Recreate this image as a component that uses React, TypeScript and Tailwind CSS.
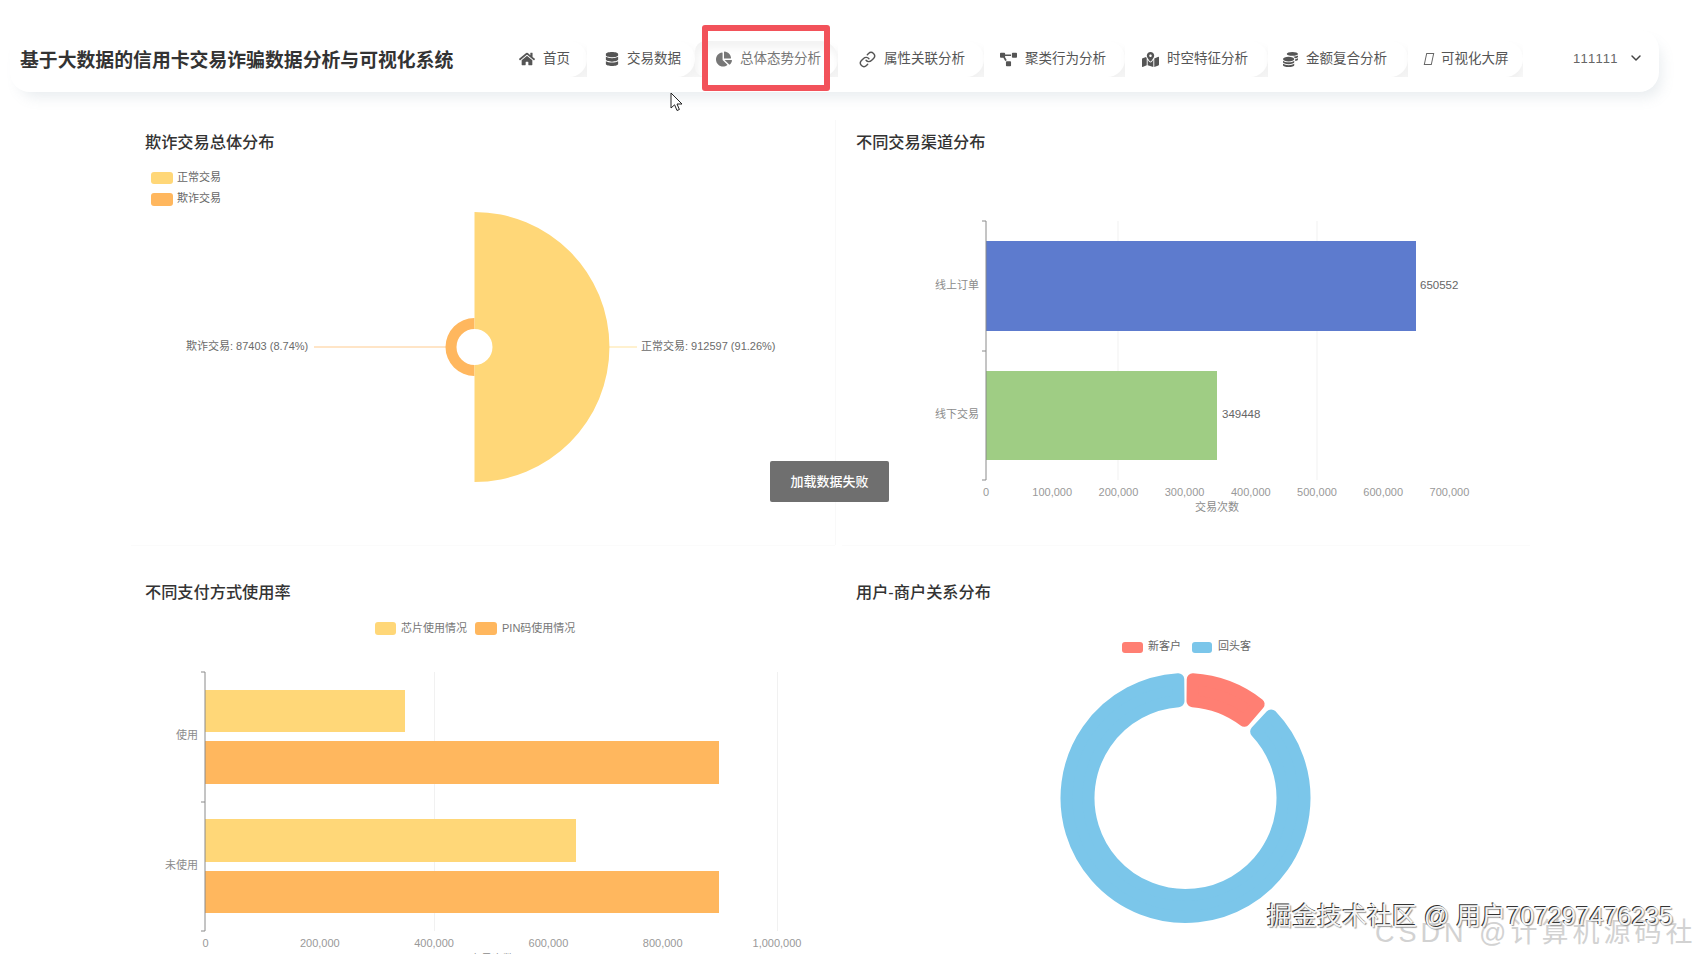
import type { ReactNode } from "react";
import { FaHome, FaDatabase, FaChartPie, FaProjectDiagram, FaMapMarkedAlt, FaCoins } from "react-icons/fa";
import { Link, ChevronDown } from "lucide-react";

const YELLOW = "#FFD778";
const ORANGE = "#FFB75E";

type NavItem = { label: string; icon: ReactNode; box: string; active?: boolean };

const navItems: NavItem[] = [
  { label: "首页", icon: <FaHome size={16} />, box: "w-[87px] pl-[19px]" },
  { label: "交易数据", icon: <FaDatabase size={14} />, box: "w-[108px] pl-[18px]" },
  { label: "总体态势分析", icon: <FaChartPie size={16} />, box: "w-[143px] pl-[21px]", active: true },
  { label: "属性关联分析", icon: <Link size={17} />, box: "w-[146px] pl-[21px]" },
  { label: "聚类行为分析", icon: <FaProjectDiagram size={17} />, box: "w-[141px] pl-[16px]" },
  { label: "时空特征分析", icon: <FaMapMarkedAlt size={17} />, box: "w-[143px] pl-[17px]" },
  { label: "金额复合分析", icon: <FaCoins size={15} />, box: "w-[140px] pl-[15px]" },
  {
    label: "可视化大屏",
    icon: <span className="block w-[8px] h-[12px] border border-[#666] -skew-x-12" />,
    box: "w-[115px] pl-[17px]",
  },
];

// chart label helper, coordinates are the page's own
function Label({
  x,
  y,
  children,
  anchor = "start",
  size = 11,
  color = "#777",
}: {
  x: number;
  y: number;
  children: ReactNode;
  anchor?: "start" | "middle" | "end";
  size?: number;
  color?: string;
}) {
  return (
    <text x={x} y={y} textAnchor={anchor} dominantBaseline="central" fontSize={size} fill={color}>
      {children}
    </text>
  );
}

function LegendBox({ x, y, w, h, color }: { x: number; y: number; w: number; h: number; color: string }) {
  return <rect x={x} y={y} width={w} height={h} rx={3} fill={color} />;
}

function AxisY({ x, top, mid, bottom }: { x: number; top: number; mid: number; bottom: number }) {
  return (
    <path
      d={`M${x - 4} ${top}H${x}V${bottom}H${x - 4}M${x - 4} ${mid}H${x}`}
      fill="none"
      stroke="#8a8a8a"
      strokeWidth={1}
    />
  );
}

function ringSector(cx: number, cy: number, r0: number, r1: number, a0: number, a1: number, inset: number) {
  const r = (d: number) => (d * Math.PI) / 180;
  const rOut = r1 - inset;
  const rIn = r0 + inset;
  const start = r(a0);
  const end = r(a1);
  const dOut = inset / rOut;
  const dIn = inset / rIn;
  const pt = (rad: number, a: number) => `${cx + rad * Math.sin(a)} ${cy - rad * Math.cos(a)}`;
  const large = a1 - a0 > 180 ? 1 : 0;
  return `M${pt(rOut, start + dOut)}A${rOut} ${rOut} 0 ${large} 1 ${pt(rOut, end - dOut)}L${pt(rIn, end - dIn)}A${rIn} ${rIn} 0 ${large} 0 ${pt(rIn, start + dIn)}Z`;
}

function FraudPie() {
  return (
    <svg viewBox="130 155 705 390" className="block w-[705px] h-[390px]">
      <LegendBox x={151} y={172} w={22} h={12} color={YELLOW} />
      <Label x={177} y={177} color="#666">正常交易</Label>
      <LegendBox x={151} y={193} w={22} h={13} color={ORANGE} />
      <Label x={177} y={198} color="#666">欺诈交易</Label>
      <path d="M314 347H446" stroke="#FFDDB5" strokeWidth={1.5} />
      <path d="M608 347H637" stroke="#FFEDBF" strokeWidth={1.5} />
      <path d="M474.5 318A29 29 0 0 0 474.5 376V365A18 18 0 0 1 474.5 329Z" fill={ORANGE} />
      <path d="M474.5 212A135 135 0 0 1 474.5 482V365A18 18 0 0 0 474.5 329Z" fill={YELLOW} />
      <Label x={186} y={346} color="#6b6b6b">欺诈交易: 87403 (8.74%)</Label>
      <Label x={641} y={346} color="#6b6b6b">正常交易: 912597 (91.26%)</Label>
    </svg>
  );
}

function ChannelBars() {
  const ticks = ["0", "100,000", "200,000", "300,000", "400,000", "500,000", "600,000", "700,000"];
  return (
    <svg viewBox="841 155 690 390" className="block w-[690px] h-[390px]">
      <path d="M1118 221V480M1317 221V480" stroke="#f1f1f1" strokeWidth={1} />
      <rect x={986} y={241} width={430} height={90} fill="#5D7BCE" />
      <rect x={986} y={371} width={231} height={89} fill="#9FCD84" />
      <AxisY x={986} top={221} mid={351} bottom={480} />
      <Label x={979} y={285} anchor="end" color="#8c8c8c">线上订单</Label>
      <Label x={979} y={414} anchor="end" color="#8c8c8c">线下交易</Label>
      <Label x={1420} y={285} size={11.5} color="#666">650552</Label>
      <Label x={1222} y={414} size={11.5} color="#666">349448</Label>
      {ticks.map((t, i) => (
        <Label key={t} x={986 + i * 66.2} y={492} anchor="middle" color="#999">
          {t}
        </Label>
      ))}
      <Label x={1217} y={507} anchor="middle" color="#8c8c8c">交易次数</Label>
    </svg>
  );
}

function PaymentBars() {
  const ticks = ["0", "200,000", "400,000", "600,000", "800,000", "1,000,000"];
  return (
    <svg viewBox="130 605 705 390" className="block w-[705px] h-[390px]">
      <LegendBox x={375} y={622} w={21} h={13} color={YELLOW} />
      <Label x={401} y={628} color="#777">芯片使用情况</Label>
      <LegendBox x={475} y={622} w={22} h={13} color={ORANGE} />
      <Label x={502} y={628} color="#777">PIN码使用情况</Label>
      <path d="M434.5 672V931M777.5 672V931" stroke="#f1f1f1" strokeWidth={1} />
      <rect x={205} y={690} width={200} height={42} fill={YELLOW} />
      <rect x={205} y={741} width={514} height={43} fill={ORANGE} />
      <rect x={205} y={819} width={371} height={43} fill={YELLOW} />
      <rect x={205} y={871} width={514} height={42} fill={ORANGE} />
      <AxisY x={205} top={672} mid={802} bottom={931} />
      <Label x={198} y={735} anchor="end" color="#8c8c8c">使用</Label>
      <Label x={198} y={865} anchor="end" color="#8c8c8c">未使用</Label>
      {ticks.map((t, i) => (
        <Label key={t} x={205.5 + i * 114.3} y={943} anchor="middle" color="#999">
          {t}
        </Label>
      ))}
      <Label x={492} y={959} anchor="middle" color="#8c8c8c">交易次数</Label>
    </svg>
  );
}

function CustomerDonut() {
  return (
    <svg viewBox="841 605 690 390" className="block w-[690px] h-[390px]">
      <LegendBox x={1122} y={642} w={21} h={11} color="#FF7F73" />
      <Label x={1148} y={646} color="#666">新客户</Label>
      <LegendBox x={1192} y={642} w={20} h={11} color="#7BC6EA" />
      <Label x={1218} y={646} color="#666">回头客</Label>
      <path
        d={ringSector(1185.5, 798, 91, 125, 43.2, 359.4, 6)}
        fill="#7BC6EA"
        stroke="#7BC6EA"
        strokeWidth={12}
        strokeLinejoin="round"
      />
      <path
        d={ringSector(1185.5, 798, 91, 125, 0.6, 40.8, 6)}
        fill="#FF7F73"
        stroke="#FF7F73"
        strokeWidth={12}
        strokeLinejoin="round"
      />
    </svg>
  );
}

function ChartCard({ title, divider, children }: { title: string; divider?: boolean; children: ReactNode }) {
  return (
    <div className={`h-[425px] bg-white shadow-[0_1px_1px_-1px_rgba(0,0,0,0.1)] ${divider ? "border-r border-[#f9f9f9]" : ""}`}>
      <h3 className="px-[15px] pt-[10px] h-[35px] text-[16.2px] leading-[24px] font-medium text-[#333]">{title}</h3>
      {children}
    </div>
  );
}

export default function App() {
  return (
    <div className="relative w-full h-screen overflow-hidden bg-white font-['Liberation_Sans','Noto_Sans_CJK_SC',sans-serif]">
      {/* top bar */}
      <header className="ml-[10px] mt-[30px] w-[1649px] h-[62px] flex rounded-[20px] bg-white shadow-[6px_9px_14px_-4px_rgba(110,135,155,0.16)]">
        <h1 className="w-[490px] shrink-0 pl-[10px] pt-[15px] text-[18.85px] leading-[32px] font-bold text-[#333]">
          基于大数据的信用卡交易诈骗数据分析与可视化系统
        </h1>
        <nav className="mt-[11px] h-[36px] flex overflow-hidden">
          {navItems.map((item) => (
            <div
              key={item.label}
              className={`${item.box} shrink-0 h-full flex items-center gap-[8px] rounded-r-[18px] text-[13.5px] ${
                item.active
                  ? "rounded-l-[10px] bg-white text-[#777] shadow-[inset_3px_7px_8px_rgba(0,0,0,0.05),4px_8px_12px_rgba(0,0,0,0.06)]"
                  : "bg-white text-[#555] shadow-[4px_8px_12px_rgba(0,0,0,0.06)]"
              }`}
            >
              {item.icon}
              <span>{item.label}</span>
            </div>
          ))}
        </nav>
        <div className="ml-[50px] mt-[11px] h-[36px] flex items-center gap-[9px] text-[13px] tracking-[1.2px] text-[#666]">
          <span>111111</span>
          <ChevronDown size={16} strokeWidth={2.2} className="text-[#444] -mt-[3px]" />
        </div>
      </header>

      {/* charts */}
      <main className="ml-[130px] mt-[28px] grid grid-cols-[706px_690px] gap-x-[5px] gap-y-[25px]">
        <ChartCard title="欺诈交易总体分布" divider>
          <FraudPie />
        </ChartCard>
        <ChartCard title="不同交易渠道分布">
          <ChannelBars />
        </ChartCard>
        <ChartCard title="不同支付方式使用率">
          <PaymentBars />
        </ChartCard>
        <ChartCard title="用户-商户关系分布">
          <CustomerDonut />
        </ChartCard>
      </main>

      {/* toast */}
      <div className="absolute left-[770px] top-[461px] w-[119px] h-[41px] flex items-center justify-center rounded-[2px] bg-[#6f6f6f] text-[13px] font-medium text-white">
        加载数据失败
      </div>

      {/* red annotation box */}
      <div className="absolute left-[702px] top-[25px] w-[128px] h-[66px] rounded-[3px] border-[6px] border-[#F2525A]" />

      {/* mouse cursor */}
      <svg viewBox="0 0 14 20" className="absolute left-[670px] top-[92px] w-[14px] h-[20px]">
        <path d="M1 1V16L4.6 12.8L7 18.5L9.4 17.5L7 12H12Z" fill="#fff" stroke="#222" strokeWidth={1} strokeLinejoin="round" />
      </svg>

      {/* watermarks */}
      <div className="absolute left-[1375px] top-[914px] whitespace-nowrap text-[27px] leading-[38px] tracking-[4px] text-[#d2d2d2]">
        CSDN @计算机源码社
      </div>
      <div className="absolute left-[1267px] top-[899px] whitespace-nowrap text-[25px] leading-[34px] text-[#f4f4f4] [text-shadow:-1px_-1px_0_#333,1px_1px_1px_#999]">
        掘金技术社区 @ 用户707297476235
      </div>
    </div>
  );
}
